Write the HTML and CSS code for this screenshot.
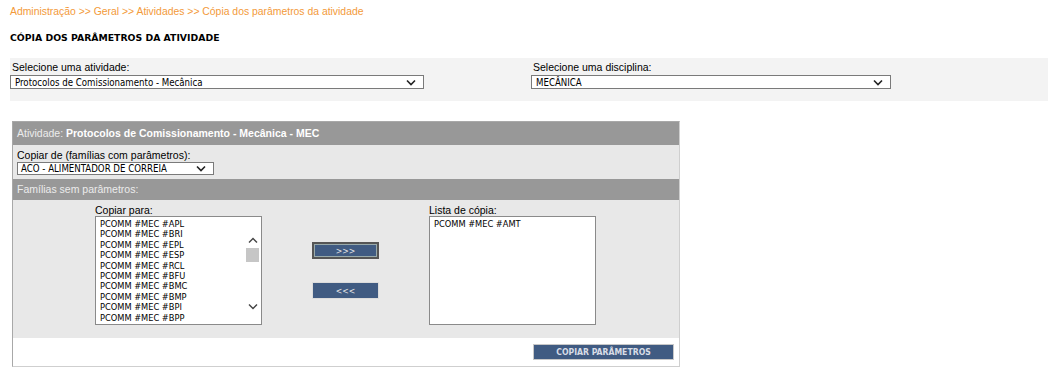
FILE: index.html
```html
<!DOCTYPE html>
<html lang="pt-BR">
<head>
    <meta charset="UTF-8">
    <title>Cópia dos parâmetros da atividade</title>
    <link rel="stylesheet" href="styles.css">
</head>
<body>

    <!-- caminho -->
    <div class="breadcrumb">Administração &gt;&gt; Geral &gt;&gt; Atividades &gt;&gt; Cópia dos parâmetros da atividade</div>

    <h1 class="title">CÓPIA DOS PARÂMETROS DA ATIVIDADE</h1>

    <!-- filtros -->
    <div class="filters">
        <div class="field field-atividade">
            <label>Selecione uma atividade:</label>
            <div class="select">
                <span>Protocolos de Comissionamento - Mecânica</span>
                <svg width="10" height="7" viewBox="0 0 10 7"><path d="M1 1.5 L5 5.5 L9 1.5" fill="none" stroke="#222" stroke-width="1.6"/></svg>
            </div>
        </div>
        <div class="field field-disciplina">
            <label>Selecione uma disciplina:</label>
            <div class="select">
                <span>MECÂNICA</span>
                <svg width="10" height="7" viewBox="0 0 10 7"><path d="M1 1.5 L5 5.5 L9 1.5" fill="none" stroke="#222" stroke-width="1.6"/></svg>
            </div>
        </div>
    </div>

    <!-- painel de copia -->
    <div class="panel">
        <div class="panel-head">Atividade: <b>Protocolos de Comissionamento - Mecânica - MEC</b></div>

        <div class="panel-section origem">
            <label>Copiar de (famílias com parâmetros):</label>
            <div class="select small">
                <span>ACO - ALIMENTADOR DE CORREIA</span>
                <svg width="10" height="7" viewBox="0 0 10 7"><path d="M1 1.5 L5 5.5 L9 1.5" fill="none" stroke="#222" stroke-width="1.6"/></svg>
            </div>
        </div>

        <div class="panel-head light">Famílias sem parâmetros:</div>

        <div class="panel-section lists">
            <div class="list-col">
                <label>Copiar para:</label>
                <div class="listbox">
                    <ul>
                        <li>PCOMM #MEC #APL</li>
                        <li>PCOMM #MEC #BRI</li>
                        <li>PCOMM #MEC #EPL</li>
                        <li>PCOMM #MEC #ESP</li>
                        <li>PCOMM #MEC #RCL</li>
                        <li>PCOMM #MEC #BFU</li>
                        <li>PCOMM #MEC #BMC</li>
                        <li>PCOMM #MEC #BMP</li>
                        <li>PCOMM #MEC #BPI</li>
                        <li>PCOMM #MEC #BPP</li>
                    </ul>
                    <div class="scrollbar">
                        <svg class="arrow" width="10" height="7" viewBox="0 0 10 7"><path d="M1 5.5 L5 1.5 L9 5.5" fill="none" stroke="#444" stroke-width="1.4"/></svg>
                        <div class="thumb"></div>
                        <div class="track"></div>
                        <svg class="arrow" width="10" height="7" viewBox="0 0 10 7"><path d="M1 1.5 L5 5.5 L9 1.5" fill="none" stroke="#444" stroke-width="1.4"/></svg>
                    </div>
                </div>
            </div>

            <div class="move-buttons">
                <button class="btn focused">&gt;&gt;&gt;</button>
                <button class="btn">&lt;&lt;&lt;</button>
            </div>

            <div class="list-col">
                <label>Lista de cópia:</label>
                <div class="listbox">
                    <ul>
                        <li>PCOMM #MEC #AMT</li>
                    </ul>
                </div>
            </div>
        </div>

        <div class="panel-foot">
            <button class="btn btn-copy">COPIAR PARÂMETROS</button>
        </div>
    </div>

</body>
</html>
```

FILE: styles.css
```css
body {
    margin: 0;
    padding: 0;
    font-family: "Liberation Sans", Arial, sans-serif;
    font-size: 10.5px;
    color: #000;
    background-color: #ffffff;
    width: 1054px;
}

.breadcrumb {
    color: #f39a3a;
    font-size: 10.4px;
    padding: 5px 0 0 10px;
    height: 14px;
    line-height: 14px;
}

.title {
    margin: 0;
    padding: 12px 0 0 10px;
    height: 13px;
    line-height: 13px;
    font-family: "DejaVu Sans", sans-serif;
    font-size: 9.3px;
    font-weight: bold;
}

.filters {
    margin: 14px 6px 0 10px;
    background-color: #f3f3f3;
    height: 43px;
    display: flex;
    padding-top: 3px;
    box-sizing: border-box;
}

.field label {
    display: block;
    height: 12px;
    line-height: 12px;
    padding-left: 2px;
}

.field-atividade {
    width: 521px;
}

.field-atividade .select {
    width: 414px;
}

.field-disciplina .select {
    width: 360px;
}

.select {
    display: flex;
    align-items: center;
    justify-content: space-between;
    box-sizing: border-box;
    height: 14px;
    padding: 0 7px 0 4px;
    margin-top: 2px;
    background-color: #fff;
    border: 1px solid #7a7a7a;
    font-family: "DejaVu Sans Condensed", "DejaVu Sans", sans-serif;
    font-size: 9.6px;
}

.select.small {
    width: 197px;
    height: 13px;
    margin-top: 1px;
    padding-left: 3px;
}

.panel {
    margin: 20px 0 0 12px;
    width: 668px;
    height: 246px;
    box-sizing: border-box;
    border: 1px solid #a8a8a8;
    border-right-color: #cfcfcf;
    border-bottom-color: #cfcfcf;
    background-color: #fff;
}

.panel-head {
    background-color: #989898;
    color: #ececec;
    height: 23px;
    line-height: 22px;
    padding-left: 4px;
}

.panel-head b {
    color: #fff;
}

.panel-head.light {
    height: 21px;
    line-height: 20px;
}

.panel-section {
    background-color: #e8e8e8;
}

.origem {
    height: 34px;
    padding: 4px 0 0 4px;
    box-sizing: border-box;
}

.origem label {
    display: block;
    height: 12px;
    line-height: 12px;
}

.lists {
    height: 138px;
    display: flex;
    padding-left: 82px;
    gap: 50px;
    box-sizing: border-box;
}

.list-col label {
    display: block;
    height: 12px;
    line-height: 12px;
    margin-top: 4px;
}

.listbox {
    width: 167px;
    height: 109px;
    box-sizing: border-box;
    background-color: #fff;
    border: 1px solid #8a8a8a;
    display: flex;
    justify-content: space-between;
    overflow: hidden;
}

.listbox ul {
    list-style: none;
    margin: 0;
    padding: 2px 0 0 4px;
    font-family: "DejaVu Sans Condensed", "DejaVu Sans", sans-serif;
    font-size: 9.2px;
}

.listbox li {
    height: 10.4px;
    line-height: 10.4px;
}

.scrollbar {
    width: 15px;
    display: flex;
    flex-direction: column;
    align-items: center;
    padding: 20px 0 14px 0;
    margin-right: 1px;
}

.scrollbar .arrow {
    flex: none;
}

.scrollbar .thumb {
    width: 13px;
    height: 14px;
    margin-top: 4px;
    background-color: #c6c6c6;
}

.scrollbar .track {
    flex: 1;
}

.move-buttons {
    display: flex;
    flex-direction: column;
    gap: 23px;
    padding-top: 42px;
}

.btn {
    font-family: "DejaVu Sans Condensed", "DejaVu Sans", sans-serif;
    font-size: 8.6px;
    color: #e6e6e6;
    background-color: #405b82;
    border: 1px solid #dcdcdc;
    width: 67px;
    height: 17px;
    padding: 0;
    cursor: pointer;
}

.btn.focused {
    border: 2px solid #555;
    box-shadow: inset 0 0 0 1px #9aa;
}

.panel-foot {
    display: flex;
    justify-content: flex-end;
    padding: 6px 5px 0 0;
}

.btn-copy {
    width: 141px;
    height: 16px;
    font-weight: bold;
    color: #d8dde6;
    border-color: #c8c8c8;
}
```
